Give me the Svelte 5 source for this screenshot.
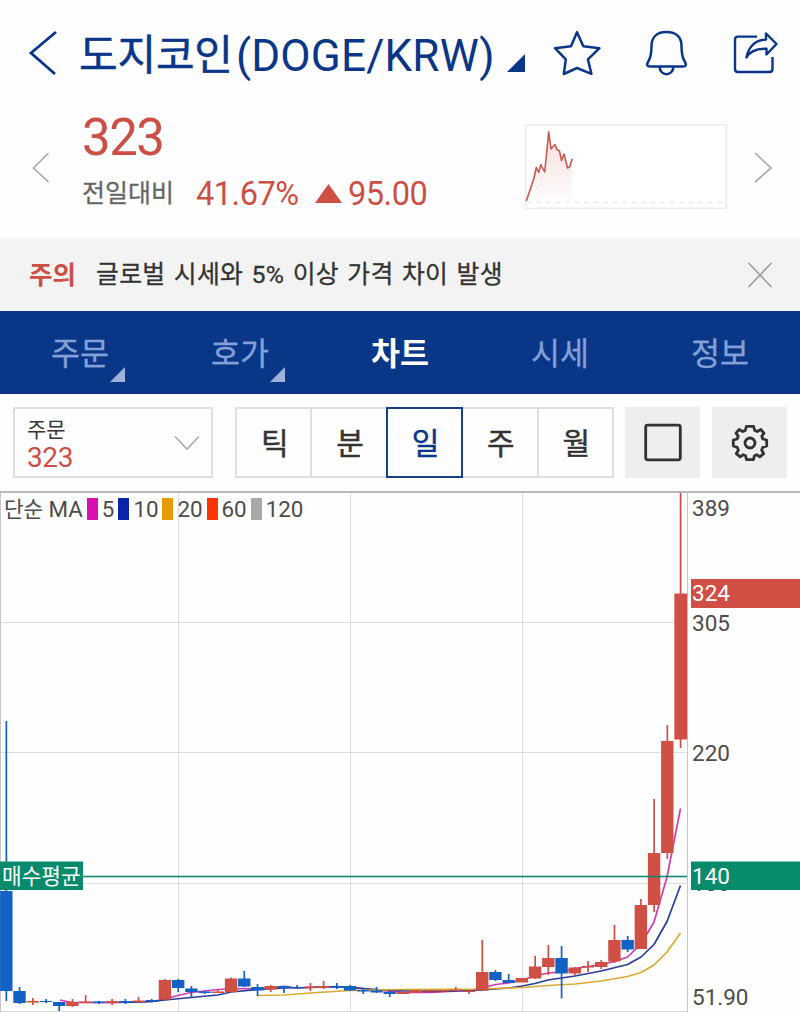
<script>
  const tabs = [
    { name: '주문', more: true },
    { name: '호가', more: true },
    { name: '차트', active: true },
    { name: '시세' },
    { name: '정보' }
  ];
  const periods = ['틱', '분', '일', '주', '월'];
  const legend = [
    { n: '5', c: '#d810b0' },
    { n: '10', c: '#0a26a8' },
    { n: '20', c: '#e69a06' },
    { n: '60', c: '#fb3502' },
    { n: '120', c: '#a9a9a9' }
  ];
  // direction, body top, body bottom, wick top, wick bottom
  const candles = [
    ['d', 891, 991, 721, 1001], ['d', 991, 1003, 987, 1004], ['u', 1001, 1002.5, 998, 1005],
    ['d', 1001, 1002, 999, 1003], ['d', 1002, 1006, 1002, 1011], ['u', 1002, 1006, 999, 1007],
    ['u', 1001.5, 1003, 995, 1003], ['d', 1001.5, 1003, 1001, 1004], ['u', 1001, 1003, 999, 1005],
    ['d', 1001, 1003, 999, 1004], ['u', 1000.5, 1002, 997, 1002], ['d', 1000, 1001.5, 999, 1001],
    ['u', 980, 999.5, 979, 1000], ['d', 980, 988, 979, 992], ['d', 988.5, 992, 986, 997],
    ['d', 991.5, 993, 991, 994], ['u', 991.5, 993, 989, 993], ['u', 978.5, 992, 977.5, 993],
    ['d', 978.5, 986.5, 971, 987], ['d', 987, 990.5, 984, 996], ['u', 986, 989.5, 985, 992],
    ['d', 986, 988, 986, 993], ['d', 987, 988, 985, 989], ['u', 986.5, 988, 983, 991],
    ['u', 986, 988, 981, 989], ['d', 986, 987.5, 983, 989], ['d', 986, 990.5, 985, 991],
    ['d', 990, 991.5, 988, 994], ['d', 990.5, 992.5, 987, 993], ['d', 992, 994, 991, 997],
    ['u', 992, 994, 992, 994], ['u', 990, 992.5, 990, 992], ['u', 990, 991.5, 990, 992],
    ['u', 990, 991.5, 990, 992], ['u', 989.5, 991, 987, 991], ['u', 990.5, 992, 990, 994],
    ['u', 972, 990.5, 940, 990], ['d', 972, 980, 970, 981], ['d', 980, 983, 974, 983],
    ['u', 978, 982.5, 978, 982], ['u', 966.5, 978.5, 956, 979], ['u', 958, 967, 945, 975],
    ['d', 958, 973.5, 946, 998.5], ['u', 967.5, 973.5, 967, 975], ['u', 966, 967.5, 961, 972],
    ['u', 962, 967, 960, 969], ['u', 940, 961.5, 925, 963], ['d', 940, 949.5, 936, 952],
    ['u', 905, 949, 899, 949], ['u', 853, 905, 799, 912], ['u', 741, 853, 725, 859],
    ['u', 593.5, 739.5, 493, 748]
  ];
  const step = 13.22;
  const cx = (i) => 6.3 + i * step;
</script>

<div class="app">
  <header>
    <svg class="back" width="30" height="48" viewBox="0 0 30 48"><path d="M28 2 L3 23 L27 44" /></svg>
    <h1><span class="ko">도지코인</span><span>(DOGE/KRW)</span></h1>
    <svg class="corner" width="18" height="18" viewBox="0 0 18 18"><path d="M0 18 L18 0 V18 Z" /></svg>
    <svg class="ic star" width="50" height="50" viewBox="552 28 50 50">
      <path d="M577 32.2 L583.3 46.2 L599.5 48.2 L587.9 59.4 L591.4 73.8 L577 68 L563.8 74 L565.8 59.4 L555 48.2 L571 46.2 Z" />
    </svg>
    <svg class="ic bell" width="46" height="50" viewBox="644 28 46 50">
      <path d="M666.3 32 C656 32 651.5 38 651.5 46 C651.5 56 650 59 648 62 C646.5 64.5 647 66.5 650 66.5 H683 C686 66.5 686.5 64.5 685 62 C683 59 681.5 56 681.5 46 C681.5 38 677 32 666.3 32 Z" />
      <path d="M659.5 67 C660.5 76.5 672.5 76.5 673.5 67" />
    </svg>
    <svg class="ic share" width="48" height="50" viewBox="732 28 48 50">
      <path d="M757 36.6 H738 Q735 36.6 735 39.6 V69 Q735 72 738 72 H769.5 Q772.5 72 772.5 69 V57" />
      <path d="M766 33.5 L776.5 44 L766.5 54.5 V48.8 C757 48.4 750 51 746.5 57.5 C748.5 46 756 39.7 766 39.6 Z" />
    </svg>
  </header>

  <section class="summary">
    <svg class="arrow" width="20" height="32" viewBox="0 0 20 32"><path d="M17.5 1 L2.5 16 L17.5 30" /></svg>
    <div class="quote">
      <div class="price">323</div>
      <div class="change">
        <span class="label">전일대비</span><span class="pct">41.67%</span>
        <svg width="27" height="20" viewBox="0 0 27 20"><path d="M0 20 L13.5 1 L27 20 Z" fill="#d04f45" /></svg>
        <span>95.00</span>
      </div>
    </div>
    <svg class="spark" width="202" height="86" viewBox="525 124 202 86">
      <defs>
        <linearGradient id="fade" x1="0" y1="0" x2="0" y2="1">
          <stop offset="0" stop-color="#d04f45" stop-opacity=".2" />
          <stop offset="1" stop-color="#d04f45" stop-opacity="0.01" />
        </linearGradient>
      </defs>
      <rect x="525.75" y="124.75" width="200.5" height="83.5" fill="#fff" stroke="#e6e6e6" stroke-width="1.2" />
      <path d="M527 202.2 H726" stroke="#e2e2e2" stroke-dasharray="5 4.5" />
      <path d="M526.5 200 L530 190 L534 178 L536 167.5 L538.7 172.5 L541 165 L545 172 L548.7 132 L551 149 L555 144.5 L557 149.5 L559.5 151 L561.5 160.5 L564 154 L567.5 168 L570 166 L572 159 V202 H526 Z" fill="url(#fade)" />
      <path class="trend" d="M526.3 201 L530 190 L534 178 L536.3 167.5 L538.7 172.5 L540.8 164.5 L544.7 172 L548.7 131.8 L551 149 L555 144.5 L557 149.5 L559.5 151 L561.5 160.5 L564 154 L567.5 168 L569.5 167 L572.2 159" />
    </svg>
    <svg class="arrow" width="20" height="32" viewBox="0 0 20 32"><path d="M2 1 L18 16 L2 30" /></svg>
  </section>

  <section class="notice">
    <strong>주의</strong>
    <p>글로벌 시세와 5% 이상 가격 차이 발생</p>
    <svg width="26" height="26" viewBox="0 0 26 26"><path d="M1.5 1 L24.5 25 M24.5 1 L1.5 25" /></svg>
  </section>

  <nav>
    {#each tabs as t}
      <div class="tab" class:active={t.active}>
        <span>{t.name}</span>
        {#if t.more}<svg width="15" height="15" viewBox="0 0 15 15"><path d="M0 15 L15 0 V15 Z" /></svg>{/if}
      </div>
    {/each}
  </nav>

  <section class="tools">
    <div class="select">
      <div><div class="cap">주문</div><div class="val">323</div></div>
      <svg width="26" height="16" viewBox="0 0 26 16"><path d="M1 1.5 L13 14 L25 1.5" /></svg>
    </div>
    <div class="periods">
      {#each periods as p, i}<div class:on={i === 2}>{p}</div>{/each}
    </div>
    <div class="sq">
      <svg width="40" height="40" viewBox="0 0 40 40"><rect x="2.7" y="2.2" width="34.6" height="34.6" rx="2" /></svg>
    </div>
    <div class="sq last">
      <svg width="40" height="40" viewBox="-20 -20 40 40">
        <path d="M-3.6 -16.6 H3.6 L4.7 -12.6 L7.2 -11.5 L10.8 -13.5 L14 -9.8 L11.8 -6.8 L12.8 -4 L16.7 -3 V3 L12.8 4.3 L11.6 7 L13.7 10.6 L9.8 13.9 L6.8 11.7 L4.4 12.8 L3.5 16.6 H-3.5 L-4.4 12.8 L-6.8 11.7 L-9.8 13.9 L-13.7 10.6 L-11.6 7 L-12.8 4.3 L-16.7 3 V-3 L-12.8 -4 L-11.8 -6.8 L-14 -9.8 L-10.8 -13.5 L-7.2 -11.5 L-4.7 -12.6 Z" />
        <circle r="5" />
      </svg>
    </div>
  </section>

  <section class="chart">
    <svg width="800" height="521" viewBox="0 491 800 521">
      <g stroke="#dcdcdc" stroke-width="1">
        <path d="M178.5 493 V1012 M350.5 493 V1012 M522.5 493 V1012 M0 622.5 H687 M0 752.5 H687 M0 883.5 H687 M0 1011.5 H687" />
      </g>
      <path d="M.5 493 V1012 M687.5 493 V1012" stroke="#c6c6c6" />
      <path d="M0 492 H800" stroke="#b9b9b9" stroke-width="2" />
      <g fill="none" stroke-width="1.7" stroke-linejoin="round">
        <path stroke="#cf3daa" d="M60 1000 L72 1002.5 L112 1002.7 L152 1001.5 L165 999 L178 995.5 L191 992.5 L218 989.5 L244 988.5 L257.5 989 L284 986.3 L297 988 L323.6 987 L350 987 L376 990 L403 992.3 L430 992.5 L469 990.5 L482 988 L495.5 984.5 L508.7 983 L522 980 L535 976 L548 973 L561.5 972 L575 968.5 L588 966.5 L601 964.5 L614.5 961.5 L627.6 957 L641 944 L654 922 L667 877 L680.5 808.5" />
        <path stroke="#293f95" d="M125 1002.5 L152 1001.5 L165 1000 L191 997.5 L218 995 L231 992 L257.5 989.5 L284 988 L310 987.5 L337 986.5 L363 988.5 L390 990.5 L430 991.5 L456 991 L482 990 L508.7 988 L522 986 L535 983.5 L548 980 L575 976 L601 971 L627.6 964.5 L641 957 L654 944.5 L667 921.5 L680.5 885.5" />
        <path stroke="#d9ab35" d="M257.5 995.5 L284 995 L310 993 L350 990.5 L400 989.5 L440 989.3 L482 989 L522 987.5 L548 985.5 L575 984 L601 981 L627.6 976.5 L641 972.5 L654 965 L667 952 L680.5 933" />
      </g>
      {#each candles as [dir, top, bottom, high, low], i}
        <g fill={dir === 'u' ? '#d04f45' : '#1261c4'}>
          <rect x={cx(i) - 0.8} y={high} width="1.7" height={low - high} />
          <rect x={cx(i) - 6.2} y={top} width={i === 51 ? 12.8 : 12.4} height={bottom - top} />
        </g>
      {/each}
      <path d="M0 876.5 H687" stroke="#07866c" stroke-width="1.6" />
      <rect x="0" y="861.5" width="83" height="28.5" fill="#078b6c" />
      <text x="2" y="884" class="avg">매수평균</text>
      <g class="axis">
        <text x="692" y="516.3">389</text>
        <text x="692" y="630.6">305</text>
        <text x="692" y="761">220</text>
        <text x="692" y="891.3">136</text>
        <text x="692" y="1004.8">51.90</text>
      </g>
      <rect x="691" y="579" width="109" height="29" fill="#d04f45" />
      <rect x="691" y="861.5" width="109" height="28.5" fill="#078b6c" />
      <g class="axis tag">
        <text x="692" y="601.3">324</text>
        <text x="692" y="884">140</text>
      </g>
    </svg>
    <div class="legend">
      <span class="ma"><span class="han">단순</span> MA</span>
      {#each legend as l}<i style="background:{l.c}"></i><span>{l.n}</span>{/each}
    </div>
  </section>
</div>

<style>
  :global(body) { background: #fff; overflow: hidden; }
  .app { width: 800px; height: 1012px; overflow: hidden; background: #fefefe; font-family: Roboto, 'Noto Sans CJK KR', sans-serif; color: #333; }
  svg { display: block; flex: none; }
  header { height: 106px; display: flex; align-items: flex-start; padding-left: 28px; }
  .back { margin-top: 30px; fill: none; stroke: #093687; stroke-width: 2.8; }
  h1 { margin: 26px 0 0 21px; width: 426px; font-weight: 400; font-size: 44px; line-height: 60px; color: #093687; display: flex; white-space: nowrap; letter-spacing: .2px; }
  h1 .ko { font-size: 42px; letter-spacing: -.2px; width: 157px; -webkit-text-stroke: .5px #093687; }
  .corner { margin: 54px 0 0 2px; fill: #093687; }
  .ic { margin-top: 28px; fill: none; stroke: #093687; stroke-width: 2.5; stroke-linejoin: round; }
  .star { margin-left: 27px; }
  .bell { margin-left: 42px; }
  .share { margin-left: 42px; stroke-width: 2.4; }
  .summary { height: 132px; display: flex; align-items: flex-start; padding-left: 31px; }
  .arrow { margin-top: 46px; fill: none; stroke: #aaa; stroke-width: 1.7; }
  .quote { margin-left: 31px; width: 443px; color: #cc4f46; }
  .price { height: 63px; line-height: 64px; font-size: 51px; letter-spacing: -1.5px; }
  .change { display: flex; height: 50px; line-height: 50px; font-size: 32.6px; letter-spacing: -.5px; white-space: nowrap; }
  .label { font-size: 25px; line-height: 50px; color: #666; width: 114px; letter-spacing: 0; -webkit-text-stroke: .3px #666; }
  .pct { width: 119px; }
  .change svg { margin: 14px 6px 0 0; }
  .spark { margin-top: 18px; }
  .spark path { fill: none; }
  .spark path[fill] { fill: url(#fade); }
  .spark .trend { stroke: #c65a50; stroke-width: 1.6; stroke-linejoin: round; }
  .spark + .arrow { margin-left: 26px; }
  .notice { height: 73px; background: #f3f3f3; display: flex; align-items: center; padding: 0 27px 0 29px; font-size: 24.8px; box-sizing: border-box; }
  .notice strong { color: #cc4f46; width: 67px; font-size: 25.5px; font-weight: 700; padding-bottom: 4px; }
  .notice p { margin: 0; padding-bottom: 5px; flex: 1; white-space: nowrap; color: #333; letter-spacing: .35px; word-spacing: 1.8px; -webkit-text-stroke: .3px #333; }
  .notice svg { fill: none; stroke: #999; stroke-width: 1.5; }
  nav { height: 83px; background: #093687; display: grid; grid-template-columns: repeat(5, 1fr); }
  .tab { position: relative; text-align: center; font-size: 31.5px; line-height: 87px; color: #84a0d8; height: 83px; -webkit-text-stroke: .3px #84a0d8; }
  .tab.active { color: #fff; font-weight: 700; -webkit-text-stroke: 0; }
  .tab svg { position: absolute; left: 110px; top: 56px; fill: #9db1dd; }
  .tools { height: 97px; display: flex; align-items: flex-start; padding: 13px 0 0 13px; box-sizing: border-box; }
  .select { box-sizing: border-box; width: 200px; height: 71px; border: 2px solid #dedede; display: flex; justify-content: space-between; align-items: center; padding: 0 11px 0 12px; }
  .select svg { fill: none; stroke: #aaa; stroke-width: 1.6; }
  .cap { font-size: 21px; line-height: 26px; padding-top: 3px; }
  .val { font-size: 28px; line-height: 29px; color: #cc4f46; letter-spacing: -.4px; }
  .periods { display: flex; margin-left: 22px; width: 379px; height: 71px; box-sizing: border-box; }
  .periods div { flex: 1; box-sizing: border-box; border: 2px solid #dedede; margin-right: -2px; text-align: center; font-size: 30px; line-height: 69px; padding-left: 2px; -webkit-text-stroke: .45px currentColor; }
  .periods div:last-child { margin-right: 0; }
  .periods .on { border-color: #17427f; color: #093687; z-index: 1; }
  .sq { width: 75px; height: 71px; margin-left: 11px; background: #eee; display: flex; align-items: center; justify-content: center; }
  .sq.last { margin-left: 12px; }
  .sq svg { fill: none; stroke: #333; stroke-width: 2.8; stroke-linejoin: round; }
  .chart { position: relative; height: 521px; }
  .axis { font-size: 22.5px; fill: #4c4c4c; }
  .tag { fill: #fff; }
  .avg { font-size: 21.4px; fill: #fff; }
  .legend { position: absolute; left: 4px; top: 5px; height: 26px; display: flex; align-items: center; font-size: 22.4px; line-height: 26px; color: #4c4c4c; white-space: nowrap; }
  .legend i { width: 11px; height: 22px; margin: 0 4px; }
  .legend span { letter-spacing: -.05px; }
  .legend .han { font-size: 21.3px; }
</style>
